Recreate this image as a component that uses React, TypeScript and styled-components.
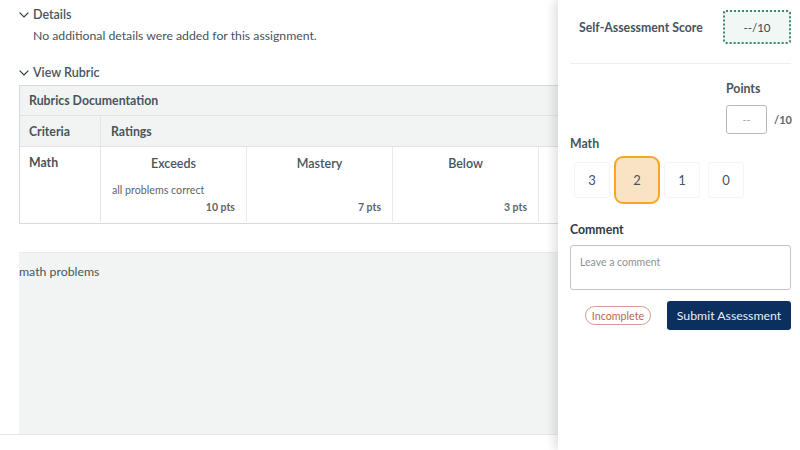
import React from "react";
import styled, { createGlobalStyle } from "styled-components";

const GlobalStyle = createGlobalStyle`
  html, body {
    margin: 0;
    width: 800px;
    height: 450px;
    overflow: hidden;
    background: #fff;
    font-family: Lato, "Open Sans", sans-serif;
    color: #2d3b45;
  }
`;

const ratings = [
  { title: "Exceeds", desc: "all problems correct", pts: "10 pts" },
  { title: "Mastery", desc: "", pts: "7 pts" },
  { title: "Below", desc: "", pts: "3 pts" },
  { title: "", desc: "", pts: "" },
];

const Chevron = () => (
  <ChevronIcon viewBox="0 0 10 6" aria-hidden="true">
    <path d="M0.6 0.6 L5 5 L9.4 0.6" fill="none" stroke="#2d3b45" strokeWidth="1.2" />
  </ChevronIcon>
);

function App() {
  return (
    <Page>
      <GlobalStyle />
      <Main>
        <Content>
          <SectionHead>
            <Chevron />
            Details
          </SectionHead>
          <DetailsText>No additional details were added for this assignment.</DetailsText>
          <RubricHead>
            <Chevron />
            View Rubric
          </RubricHead>
          <Rubric>
            <TitleRow>Rubrics Documentation</TitleRow>
            <ColumnsRow>
              <CriteriaHead>Criteria</CriteriaHead>
              <RatingsHead>Ratings</RatingsHead>
            </ColumnsRow>
            <BodyRow>
              <CriteriaCell>Math</CriteriaCell>
              {ratings.map((r, i) => (
                <RatingCell key={i}>
                  <RatingTitle>{r.title}</RatingTitle>
                  <RatingDesc>{r.desc}</RatingDesc>
                  <RatingPts>{r.pts}</RatingPts>
                </RatingCell>
              ))}
            </BodyRow>
          </Rubric>
          <Submission>math problems</Submission>
        </Content>
        <Footer />
      </Main>
      <Panel>
        <ScoreRow>
          <ScoreLabel>Self-Assessment Score</ScoreLabel>
          <ScoreBox>--/10</ScoreBox>
        </ScoreRow>
        <PointsBlock>
          <PointsLabel>Points</PointsLabel>
          <PointsRow>
            <PointsInput>--</PointsInput>
            <PointsMax>/10</PointsMax>
          </PointsRow>
        </PointsBlock>
        <MathLabel>Math</MathLabel>
        <Scores>
          <ScoreButton>3</ScoreButton>
          <ScoreButton $selected>2</ScoreButton>
          <ScoreButton>1</ScoreButton>
          <ScoreButton>0</ScoreButton>
        </Scores>
        <CommentLabel>Comment</CommentLabel>
        <CommentBox>Leave a comment</CommentBox>
        <Actions>
          <Pill>Incomplete</Pill>
          <SubmitButton>Submit Assessment</SubmitButton>
        </Actions>
      </Panel>
    </Page>
  );
}

const Page = styled.div`
  display: flex;
  width: 800px;
  height: 450px;
  overflow: hidden;
`;

const Main = styled.div`
  width: 558px;
  flex: none;
  height: 450px;
  overflow: hidden;
  display: flex;
  flex-direction: column;
`;

const Content = styled.div`
  height: 434px;
  flex: none;
  box-sizing: border-box;
  padding: 6px 0 0 19px;
  width: 600px;
  display: flex;
  flex-direction: column;
`;

const Footer = styled.div`
  border-top: 1px solid #e6e9ea;
  flex: 1;
`;

const ChevronIcon = styled.svg`
  width: 10px;
  height: 6px;
  margin-right: 4px;
  flex: none;
`;

const SectionHead = styled.div`
  display: flex;
  align-items: center;
  font-size: 12.5px;
  font-weight: 600;
  line-height: 18px;
  color: #47545c;
`;

const DetailsText = styled.div`
  font-size: 12.25px;
  line-height: 18px;
  margin: 3px 0 0 14px;
  color: #47545c;
`;

const RubricHead = styled(SectionHead)`
  margin-top: 19px;
`;

const Rubric = styled.div`
  margin-top: 3px;
  width: 700px;
  border: 1px solid #d7dadc;
  border-right: none;
  box-sizing: border-box;
  height: 139px;
  flex: none;
  color: #47545c;
`;

const TitleRow = styled.div`
  height: 30px;
  box-sizing: border-box;
  background: #f2f4f4;
  border-bottom: 1px solid #dfe2e3;
  padding-left: 9px;
  font-size: 12.3px;
  font-weight: 700;
  line-height: 30px;
`;

const ColumnsRow = styled.div`
  display: flex;
  height: 31px;
  box-sizing: border-box;
  background: #f2f4f4;
  border-bottom: 1px solid #dfe2e3;
  font-size: 12.3px;
  font-weight: 700;
  line-height: 31px;
`;

const CriteriaHead = styled.div`
  width: 71px;
  padding-left: 9px;
  border-right: 1px solid #e2e5e6;
`;

const RatingsHead = styled.div`
  padding-left: 10px;
`;

const BodyRow = styled.div`
  display: flex;
  height: 75px;
`;

const CriteriaCell = styled.div`
  width: 71px;
  padding: 8px 0 0 9px;
  border-right: 1px solid #e2e5e6;
  font-size: 12.3px;
  font-weight: 700;
  line-height: 16px;
`;

const RatingCell = styled.div`
  width: 145px;
  flex: none;
  box-sizing: content-box;
  border-right: 1px solid #e8eaeb;
  display: flex;
  flex-direction: column;
  padding-top: 8px;
`;

const RatingTitle = styled.div`
  text-align: center;
  font-size: 12.5px;
  font-weight: 600;
  line-height: 17px;
  height: 17px;
`;

const RatingDesc = styled.div`
  font-size: 10.7px;
  line-height: 14px;
  margin: 11px 0 0 11px;
  height: 14px;
  color: #5b666d;
`;

const RatingPts = styled.div`
  font-size: 10.5px;
  font-weight: 700;
  line-height: 14px;
  margin-top: 3px;
  text-align: right;
  padding-right: 11px;
  color: #5b666d;
`;

const Submission = styled.div`
  margin-top: 28px;
  flex: 1;
  background: #f2f4f4;
  border-top: 1px solid #e9ebec;
  font-size: 12.3px;
  line-height: 16px;
  padding-top: 11px;
  color: #47545c;
`;

const Panel = styled.aside`
  width: 242px;
  flex: none;
  height: 450px;
  box-sizing: border-box;
  padding: 10px 9px 0 12px;
  background: #fff;
  box-shadow: -4px 0 10px rgba(0, 0, 0, 0.12);
  position: relative;
  display: flex;
  flex-direction: column;
`;

const ScoreRow = styled.div`
  display: flex;
  align-items: center;
  justify-content: space-between;
  padding: 0 0 19px 9px;
  border-bottom: 1px solid #eceeef;
`;

const ScoreLabel = styled.div`
  font-size: 12.3px;
  font-weight: 700;
  color: #47545c;
`;

const ScoreBox = styled.div`
  width: 68px;
  height: 34px;
  box-sizing: border-box;
  border: 2px dotted #3f8a66;
  border-radius: 3px;
  background: #f0f7f4;
  display: flex;
  align-items: center;
  justify-content: center;
  font-size: 11.5px;
  color: #3a4750;
`;

const PointsBlock = styled.div`
  margin: 17px 0 0 156px;
`;

const PointsLabel = styled.div`
  font-size: 12.3px;
  font-weight: 700;
  line-height: 16px;
  color: #47545c;
`;

const PointsRow = styled.div`
  display: flex;
  align-items: center;
  margin-top: 8px;
`;

const PointsInput = styled.div`
  width: 41px;
  height: 29px;
  flex: none;
  box-sizing: border-box;
  border: 1px solid #b4babd;
  border-radius: 3px;
  font-size: 11px;
  line-height: 27px;
  text-align: center;
  color: #a0a7ab;
`;

const PointsMax = styled.div`
  margin-left: 7px;
  font-size: 11px;
  font-weight: 700;
  color: #5b666d;
`;

const MathLabel = styled.div`
  margin-top: 2px;
  font-size: 12.3px;
  font-weight: 700;
  line-height: 16px;
  color: #47545c;
`;

const Scores = styled.div`
  display: flex;
  align-items: center;
  gap: 8px;
  margin: -2px 0 0 4px;
  height: 60px;
`;

const ScoreButton = styled.div<{ $selected?: boolean }>`
  width: 36px;
  height: 36px;
  flex: none;
  box-sizing: border-box;
  display: flex;
  align-items: center;
  justify-content: center;
  border-radius: 3px;
  border: 1px solid #f3f4f5;
  font-size: 13px;
  color: #47545c;
  ${(p) =>
    p.$selected &&
    `
    width: 46px;
    height: 48px;
    margin: 0 -4px;
    border: 2.5px solid #f5a623;
    border-radius: 9px;
    background: #f8e3c4;
  `}
`;

const CommentLabel = styled.div`
  margin-top: 12px;
  font-size: 12.3px;
  font-weight: 700;
  line-height: 16px;
  color: #2d3b45;
`;

const CommentBox = styled.div`
  margin-top: 7px;
  height: 45px;
  box-sizing: border-box;
  border: 1px solid #c0c5c9;
  border-radius: 3px;
  padding: 9px 9px;
  font-size: 10.5px;
  line-height: 14px;
  color: #8a9297;
`;

const Actions = styled.div`
  display: flex;
  align-items: center;
  justify-content: flex-end;
  gap: 16px;
  margin-top: 11px;
`;

const Pill = styled.div`
  box-sizing: border-box;
  width: 66px;
  height: 19px;
  border: 1px solid #cf9f90;
  border-radius: 10px;
  font-size: 10.7px;
  line-height: 17px;
  text-align: center;
  color: #c4644d;
`;

const SubmitButton = styled.div`
  width: 124px;
  height: 29px;
  border-radius: 3px;
  background: #0b2f5f;
  color: #e9eef4;
  font-size: 12.3px;
  line-height: 29px;
  text-align: center;
`;

export default App;
